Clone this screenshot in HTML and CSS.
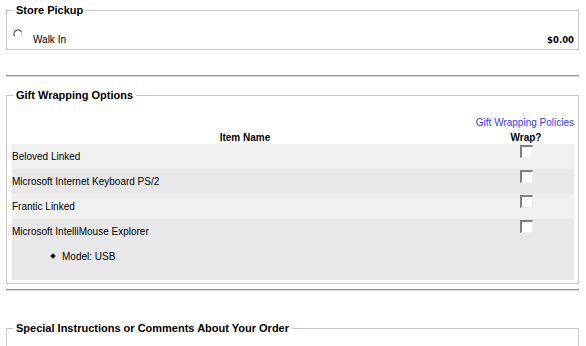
FILE: index.html
```html
<!DOCTYPE html>
<html lang="en">
<head>
    <meta charset="UTF-8">
    <title>Checkout Options</title>
    <link rel="stylesheet" href="styles.css">
</head>
<body>
    <div class="page">
        <fieldset class="box pickup">
            <legend>Store Pickup</legend>
            <div class="pickup-row">
                <span class="radio">
                    <svg width="10" height="10" viewBox="0 0 10 10">
                        <circle cx="5" cy="5" r="4" fill="#fff" stroke="#ededed" stroke-width="1.2"/>
                        <path d="M1.6 7.2 A4 4 0 0 1 8.4 2.8" fill="none" stroke="#6e6e6e" stroke-width="1.4"/>
                        <path d="M8.6 3.4 A4 4 0 0 1 8.8 5.6" fill="none" stroke="#b5b5b5" stroke-width="1.2"/>
                    </svg>
                </span>
                <span class="pickup-name">Walk In</span>
                <span class="price">$0.00</span>
            </div>
        </fieldset>

        <hr class="rule first-rule">

        <fieldset class="box wrapping">
            <legend>Gift Wrapping Options</legend>
            <div class="policy"><a href="#">Gift Wrapping Policies</a></div>
            <table class="wrap-table">
                <thead>
                    <tr>
                        <th class="item-col">Item Name</th>
                        <th class="wrap-col">Wrap?</th>
                    </tr>
                </thead>
                <tbody>
                    <tr class="odd">
                        <td class="item-col">Beloved Linked</td>
                        <td class="wrap-col"><span class="check"></span></td>
                    </tr>
                    <tr class="even">
                        <td class="item-col">Microsoft Internet Keyboard PS/2</td>
                        <td class="wrap-col"><span class="check"></span></td>
                    </tr>
                    <tr class="odd">
                        <td class="item-col">Frantic Linked</td>
                        <td class="wrap-col"><span class="check"></span></td>
                    </tr>
                    <tr class="even">
                        <td class="item-col">
                            Microsoft IntelliMouse Explorer
                            <ul class="attrs">
                                <li>Model: USB</li>
                            </ul>
                        </td>
                        <td class="wrap-col"><span class="check"></span></td>
                    </tr>
                </tbody>
            </table>
        </fieldset>

        <hr class="rule second-rule">

        <fieldset class="box notes">
            <legend>Special Instructions or Comments About Your Order</legend>
        </fieldset>
    </div>
</body>
</html>
```

FILE: styles.css
```css
body, html {
    margin: 0;
    padding: 0;
    background-color: #fff;
    font-family: "Liberation Sans", Arial, sans-serif;
    font-size: 10px;
    color: #000;
    overflow: hidden;
}

.page {
    padding: 4px 7px 0 6px;
}

.box {
    margin: 0;
    border: 1px solid #c8c8c8;
    padding: 0 4px 4px 5px;
    min-width: 0;
}

.box legend {
    font-size: 11px;
    font-weight: bold;
    padding: 0 3px;
    margin-left: 1px;
    line-height: 13px;
}

.pickup-row {
    display: flex;
    align-items: flex-start;
    height: 28px;
}

.radio {
    display: flex;
    width: 10px;
    height: 10px;
    margin-left: 1px;
    margin-top: 12px;
}

.pickup-name {
    margin-left: 10px;
    line-height: 12px;
    margin-top: 17px;
}

.price {
    margin-left: auto;
    font-family: "DejaVu Sans", Verdana, sans-serif;
    font-size: 8.5px;
    font-weight: bold;
    line-height: 12px;
    margin-top: 17px;
}

.rule {
    border: none;
    border-top: 1px solid #9a9a9a;
    border-bottom: 1px solid #d8d8d8;
    margin: 0;
    height: 0;
}

.first-rule {
    margin-top: 25px;
    margin-bottom: 12px;
}

.second-rule {
    margin-top: 5px;
    margin-bottom: 31px;
}

.wrapping {
    padding-bottom: 3px;
}

.policy {
    text-align: right;
    line-height: 12px;
    padding-top: 15px;
    padding-bottom: 2px;
}

.policy a {
    color: #3a3aff;
    text-decoration: none;
}

.wrap-table {
    width: 100%;
    border-collapse: collapse;
}

.wrap-table th {
    font-weight: bold;
    line-height: 12px;
    padding: 1px 0 0 0;
    text-align: center;
}

.wrap-table td {
    vertical-align: top;
    line-height: 12px;
}

.wrap-table td.item-col {
    padding: 7px 0 6px 0;
}

.wrap-table td.wrap-col {
    text-align: center;
    padding: 1px 0 0 0;
    width: 96px;
}

.odd {
    background-color: #f0f0f0;
}

.even {
    background-color: #e8e8e8;
}

.check {
    display: inline-block;
    box-sizing: border-box;
    width: 13px;
    height: 13px;
    background-color: #fff;
    border-top: 2px solid #808080;
    border-left: 2px solid #808080;
    border-right: 1px solid #ececec;
    border-bottom: 1px solid #ececec;
    vertical-align: top;
}

.attrs {
    list-style: none;
    margin: 13px 0 11px 0;
    padding: 0 0 0 50px;
}

.attrs li {
    position: relative;
}

.attrs li::before {
    content: "";
    position: absolute;
    left: -11px;
    top: 3px;
    width: 4px;
    height: 4px;
    background-color: #000;
    transform: rotate(45deg);
}

.notes {
    height: 40px;
}
```
